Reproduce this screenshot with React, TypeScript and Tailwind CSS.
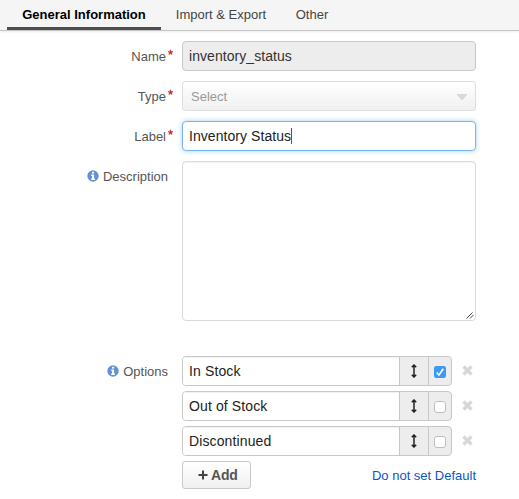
import type { ReactNode } from "react";

const fieldBase = "box-border w-[294px] h-[30px] rounded-[4px] border px-[6px] text-[14px] leading-[28px]";

function InfoIcon() {
  return (
    <svg className="mr-[4px] mt-[9px] h-[12px] w-[12px] shrink-0" viewBox="0 0 12 12">
      <circle cx="6" cy="6" r="5.7" fill="#6490d6" />
      <path d="M5 1.8h2.1v1.8H5zM4.2 4.6h2.9v3.9h.9v1.4H4.2V8.5H5V6h-.8z" fill="#fff" />
    </svg>
  );
}

function Row({ label, required, info, className, children }: {
  label: string; required?: boolean; info?: boolean; className?: string; children: ReactNode;
}) {
  return (
    <div className={`flex items-start ${className ?? ""}`}>
      <div className="flex w-[182px] shrink-0 justify-end text-[13px] leading-[31px] text-[#555]">
        {info && <InfoIcon />}
        <span>{label}</span>
        {required ? (
          <span className="mr-[8px] w-[8px] pl-[2px] text-[13px] leading-[27px] text-[#c81021] [-webkit-text-stroke:0.3px_#c81021]">*</span>
        ) : (
          <span className="w-[14px]" />
        )}
      </div>
      {children}
    </div>
  );
}

function Option({ text, checked }: { text: string; checked?: boolean }) {
  return (
    <div className="flex items-center">
      <div className="flex h-[30px] w-[270px] overflow-hidden rounded-[4px] border border-[#c8c8c8] bg-[#ededed]">
        <div className="w-[216px] bg-white pl-[6px] text-[14px] leading-[28px] tracking-[0.12px] text-[#222] shadow-[inset_0_1px_1px_rgba(0,0,0,0.06)]">{text}</div>
        <div className="flex w-[29px] items-center justify-center border-l border-[#c8c8c8]">
          <svg className="h-[14px] w-[6px]" viewBox="0 0 6 14">
            <path d="M3 1v12M.8 3.2 3 1l2.2 2.2M.8 10.8 3 13l2.2-2.2" fill="none" stroke="#222" strokeWidth="1.5" />
          </svg>
        </div>
        <div className="flex w-[23px] justify-center border-l border-[#c8c8c8] pt-[9px]">
          {checked ? (
            <svg className="h-[12px] w-[12px]" viewBox="0 0 12 12">
              <rect width="12" height="12" rx="2.3" fill="#3b99fc" />
              <path d="M2.7 6.6 5 9l4.3-6.3" fill="none" stroke="#fff" strokeWidth="1.6" />
            </svg>
          ) : (
            <div className="h-[12px] w-[12px] rounded-[3px] border border-[#c0c0c0] bg-white" />
          )}
        </div>
      </div>
      <svg className="mb-[1px] ml-[10px] h-[11px] w-[11px]" viewBox="0 0 11 11">
        <path d="M1.5 1.5l8 8M9.5 1.5l-8 8" stroke="#d8d8d8" strokeWidth="3.4" />
      </svg>
    </div>
  );
}

export default function App() {
  return (
    <div className="h-[499px] w-[519px] overflow-hidden bg-white font-['Liberation_Sans',Arial,sans-serif]">
      <nav className="flex h-[31px] border-b border-[#c4c4c4] bg-[#f5f5f5] pl-[7px] text-[13px] leading-[29px] text-[#444] shadow-[0_1px_2px_rgba(0,0,0,0.08)]">
        <div className="h-[30px] w-[154px] border-b-[3px] border-[#4d4d4d] text-center font-bold whitespace-nowrap text-black">General Information</div>
        <div className="w-[120px] text-center">Import &amp; Export</div>
        <div className="w-[62px] text-center">Other</div>
      </nav>
      <div className="flex flex-col gap-[10px] pt-[10px]">
        <Row label="Name" required className="h-[30px]">
          <div className={`${fieldBase} border-[#c8c8c8] bg-[#ededed] tracking-[0.06px] text-[#333]`}>inventory_status</div>
        </Row>
        <Row label="Type" required className="h-[30px]">
          <div className="flex h-[30px] w-[294px] items-center justify-between rounded-[3px] border border-[#dedede] bg-linear-to-b from-white to-[#f0f0f0] pt-px pr-[8px] pl-[8px] text-[13px] text-[#999]">
            <span>Select</span>
            <svg className="h-[6px] w-[10px]" viewBox="0 0 10 6"><path d="M0 0h10v1L5.5 6h-1L0 1z" fill="#d9d9d9" /></svg>
          </div>
        </Row>
        <Row label="Label" required className="h-[30px]">
          <div className={`${fieldBase} flex items-center border-[#7ab5ee] bg-white text-[#222] shadow-[0_0_5px_rgba(90,170,240,0.55)]`}>
            <span className="tracking-[0.06px]">Inventory Status</span>
            <span className="h-[16px] w-px bg-[#555]" />
          </div>
        </Row>
        <Row label="Description" info>
          <div className="flex h-[160px] w-[294px] items-end justify-end rounded-[4px] border border-[#dadada] bg-white p-[1px] shadow-[inset_0_1px_1px_rgba(0,0,0,0.05)]">
            <svg className="h-[7px] w-[8px]" viewBox="0 0 8 7"><path d="M.5 6.5 6.5.5M4 6.5 7.5 3" stroke="#444" fill="none" /></svg>
          </div>
        </Row>
        <Row label="Options" info className="mt-[25px]">
          <div className="flex flex-col gap-[5px]">
            <Option text="In Stock" checked />
            <Option text="Out of Stock" />
            <Option text="Discontinued" />
            <div className="flex w-[294px] items-start justify-between">
              <div className="flex h-[28px] w-[69px] items-center rounded-[3px] border border-[#c8c8c8] bg-linear-to-b from-white to-[#f0f0f0] pl-[15px] text-[14px] font-bold tracking-[-0.2px] text-[#555]">
                <svg className="mr-[3px] h-[10px] w-[10px]" viewBox="0 0 10 10"><path d="M5 .5v9M.5 5h9" stroke="#444" strokeWidth="2" /></svg>
                Add
              </div>
              <a className="text-[13px] leading-[29px] text-[#0a56c9]">Do not set Default</a>
            </div>
          </div>
        </Row>
      </div>
    </div>
  );
}
